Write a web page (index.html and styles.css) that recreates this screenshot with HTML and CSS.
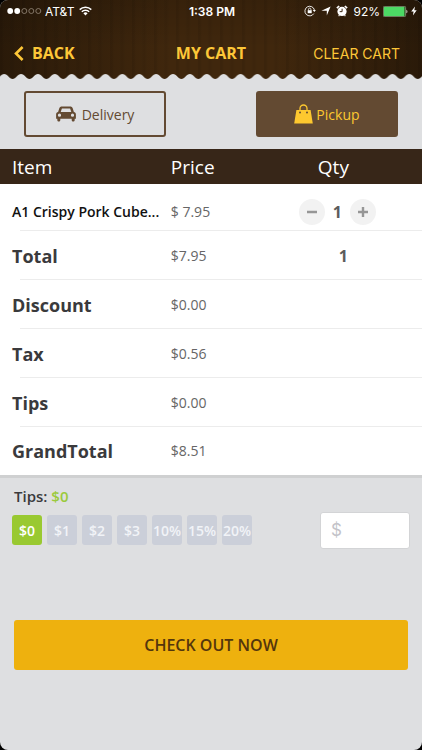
FILE: index.html
```html
<!DOCTYPE html>
<html lang="en">
<head>
  <meta charset="UTF-8">
  <meta name="viewport" content="width=device-width, initial-scale=1">
  <title>My Cart</title>
  <link rel="stylesheet" href="styles.css">
</head>
<body>
  <div class="screen">

    <header class="header">
      <div class="status-bar">
        <div class="status-left">
          <svg width="35" height="8" viewBox="0 0 35 8">
            <g fill="#fff"><circle cx="3.2" cy="4" r="2.9"/><circle cx="10.2" cy="4" r="2.9"/></g>
            <g fill="none" stroke="#a89b8c" stroke-width=".7"><circle cx="17.3" cy="4" r="2.5"/><circle cx="24.3" cy="4" r="2.5"/><circle cx="31.3" cy="4" r="2.5"/></g>
          </svg>
          <span>AT&amp;T</span>
          <svg class="wifi" width="13" height="10" viewBox="0 0 13 10" fill="none" stroke="#fff" stroke-width="1.5">
            <path d="M.7 3.6a8.3 8.3 0 0 1 11.6 0M2.8 5.8a5.3 5.3 0 0 1 7.4 0"/>
            <path d="M4.4 7.2a3 3 0 0 1 4.2 0L6.5 9.6z" fill="#fff" stroke="none"/>
          </svg>
        </div>
        <span class="clock">1:38 PM</span>
        <div class="status-right">
          <svg width="12" height="12" viewBox="0 0 12 12" fill="none" stroke="#fff">
            <path d="M9.8 8.6A4.8 4.8 0 1 1 10.4 5" stroke-width=".9"/>
            <path d="M8.7 5h3.2l-1.6 2.1z" fill="#fff" stroke="none"/>
            <path d="M4.5 5.4V4.3a1.2 1.2 0 0 1 2.4 0v1.1" stroke-width=".8"/>
            <rect x="3.7" y="5.2" width="4" height="3" fill="#fff" stroke="none"/>
          </svg>
          <svg width="10" height="10" viewBox="0 0 10 10" fill="#fff"><path d="M9.6.4L5.8 9.6V4.8H.4z"/></svg>
          <svg width="12" height="12" viewBox="0 0 11 11">
            <circle cx="5.5" cy="5.9" r="4.2" fill="#fff"/>
            <path d="M.8 2.9L2.9.9M10.2 2.9L8.1.9" stroke="#fff" stroke-width="1.5"/>
            <path d="M2.4 10.2l.8-.9M8.6 10.2l-.8-.9" stroke="#fff"/>
            <path d="M5.6 3.4v2.7H3.4" fill="none" stroke="#38230d" stroke-width=".9"/>
          </svg>
          <span>92%</span>
          <svg width="25" height="11" viewBox="0 0 25 11">
            <rect x=".4" y=".4" width="22.2" height="10.2" rx="1" fill="none" stroke="#87a680" stroke-width=".8"/>
            <rect x="1" y="1" width="20.5" height="9" fill="#4cd964"/>
            <path d="M23.4 3.7c1.4.5 1.4 3.1 0 3.6z" fill="#d8d3cc"/>
          </svg>
          <svg width="6" height="10" viewBox="0 0 6 10" fill="#fff"><path d="M4 .5L.2 5.6h2.4L1.9 9.5l3.8-5.3H3.3z"/></svg>
        </div>
      </div>

      <nav class="nav">
        <a class="back" href="#">
          <svg width="10" height="15" viewBox="0 0 10 15" fill="none" stroke="currentColor" stroke-width="2.6"><path d="M8.6 1L2 7.5 8.6 14"/></svg>
          BACK
        </a>
        <h1>MY CART</h1>
        <a class="clear" href="#">CLEAR CART</a>
      </nav>

      <!-- scalloped bottom edge -->
      <svg class="scallop" viewBox="0 0 422 6" preserveAspectRatio="none">
        <defs>
          <pattern id="wave" x="4.2" width="16.88" height="6" patternUnits="userSpaceOnUse">
            <path d="M0 0C3.4 0 5.3 5 8.44 5S13.5 0 16.88 0V6H0z" fill="#dedfe1"/>
          </pattern>
        </defs>
        <rect width="422" height="6" fill="url(#wave)"/>
      </svg>
    </header>

    <main>
      <div class="order-type">
        <button class="type-btn" type="button">
          <svg width="20" height="16" viewBox="0 0 20 16">
            <path fill="currentColor" fill-rule="evenodd" d="M6 .5h8c1.4 0 2.3.6 2.7 1.8l1.2 3.8c1.2.3 2 1.2 2 2.4v4.3h-1.2v1.3c0 2-3 2-3 0v-1.3H4.3v1.3c0 2-3 2-3 0v-1.3H.1V8.5c0-1.2.8-2.1 2-2.4l1.2-3.8C3.7 1.1 4.6.5 6 .5zM5.9 2.4L4.7 6h10.6l-1.2-3.6zM3.5 7.6a1.6 1.6 0 1 0 0 3.2 1.6 1.6 0 0 0 0-3.2zm13 0a1.6 1.6 0 1 0 0 3.2 1.6 1.6 0 0 0 0-3.2z"/>
          </svg>
          Delivery
        </button>
        <button class="type-btn active" type="button">
          <svg width="19" height="20" viewBox="0 0 19 20">
            <path d="M6 8V4.5a3.5 3.5 0 0 1 7 0V8" fill="none" stroke="#fdc82f" stroke-width="1.3"/>
            <path d="M2.4 6h14.2L18.8 19.5H.2z" fill="#fdc82f"/>
            <circle cx="6" cy="8.4" r="1" fill="#634a32"/><circle cx="13" cy="8.4" r="1" fill="#634a32"/>
          </svg>
          Pickup
        </button>
      </div>

      <table class="cart">
        <thead>
          <tr><th>Item</th><th>Price</th><th>Qty</th></tr>
        </thead>
        <tbody>
          <tr class="product">
            <th scope="row">A1 Crispy Pork Cube...</th>
            <td>$ 7.95</td>
            <td>
              <div class="stepper">
                <button type="button" aria-label="Remove one"><svg width="12" height="12" viewBox="0 0 12 12"><path d="M1 6h10"/></svg></button>
                <span>1</span>
                <button type="button" aria-label="Add one"><svg width="12" height="12" viewBox="0 0 12 12"><path d="M1 6h10M6 1v10"/></svg></button>
              </div>
            </td>
          </tr>
          <tr><th scope="row">Total</th><td>$7.95</td><td class="count">1</td></tr>
          <tr><th scope="row">Discount</th><td>$0.00</td><td></td></tr>
          <tr><th scope="row">Tax</th><td>$0.56</td><td></td></tr>
          <tr><th scope="row">Tips</th><td>$0.00</td><td></td></tr>
          <tr><th scope="row">GrandTotal</th><td>$8.51</td><td></td></tr>
        </tbody>
      </table>

      <section class="tips">
        <label class="tips-label" for="tip">Tips: <span>$0</span></label>
        <div class="tips-row">
          <div class="tip-options">
            <button class="selected" type="button">$0</button>
            <button type="button">$1</button>
            <button type="button">$2</button>
            <button type="button">$3</button>
            <button type="button">10%</button>
            <button type="button">15%</button>
            <button type="button">20%</button>
          </div>
          <input id="tip" type="text" placeholder="$">
        </div>
      </section>

      <button class="checkout" type="button">CHECK OUT NOW</button>
    </main>

  </div>
</body>
</html>
```
FILE: styles.css
```css
* {
  box-sizing: border-box;
}

html {
  background: #000;
}

body {
  margin: 0;
  font-family: "Open Sans", "Noto Sans", sans-serif;
  color: #3a3a3c;
}

button,
input {
  font-family: inherit;
  margin: 0;
  padding: 0;
}

button {
  border: none;
  cursor: pointer;
}

svg {
  display: block;
  flex: none;
}

.screen {
  min-height: 100vh;
  background: #dedfe1;
  border-radius: 8px;
  overflow: hidden;
}

/* Header */
.header {
  background:
    repeating-linear-gradient(90deg, rgba(0,0,0,0.08) 0 2px, transparent 4px 9px, rgba(0,0,0,0.05) 11px 13px, transparent 15px 22px),
    linear-gradient(rgba(0,0,0,0.15), transparent 60%),
    linear-gradient(90deg, #2a1a09, #40270d 40%, #40270d 65%, #2a1a09);
}

.status-bar,
.nav {
  display: grid;
  grid-template-columns: 1fr auto 1fr;
  align-items: center;
}

.status-bar {
  height: 22px;
  padding: 0 5px 0 7px;
  font-family: Inter, "Liberation Sans", sans-serif;
  font-size: 12px;
  color: #fff;
}

.status-left,
.status-right {
  display: flex;
  align-items: center;
  gap: 3px;
}

.status-right {
  justify-content: flex-end;
}

.status-right svg:nth-of-type(-n+3) {
  margin-right: 2px;
}

.wifi {
  margin-left: 2px;
}

.clock {
  font-weight: 600;
}

.nav {
  height: 52px;
  padding: 10px 14px 0;
}

.nav a {
  color: #fdc738;
  text-decoration: none;
}

.nav h1 {
  margin: 0;
  font-size: 16px;
  font-weight: 700;
  color: #fdc738;
}

.back {
  display: flex;
  align-items: center;
  gap: 8px;
  font-size: 16px;
  font-weight: 700;
}

.nav .clear {
  justify-self: end;
  margin-right: 8px;
  font-family: Inter, "Liberation Sans", sans-serif;
  font-size: 14px;
}

.scallop {
  width: 100%;
  height: 6px;
}

/* Delivery / pickup */
.order-type {
  display: flex;
  justify-content: space-between;
  padding: 11px 24px 12px;
}

.type-btn {
  display: flex;
  align-items: center;
  justify-content: center;
  gap: 6px;
  width: 38%;
  height: 46px;
  border: 2px solid #634a32;
  border-radius: 3px;
  background: transparent;
  color: #634a32;
  font-size: 14px;
}

.type-btn.active {
  gap: 3px;
  background: #634a32;
  color: #fdc82f;
}

/* Cart table */
.cart {
  width: 100%;
  table-layout: fixed;
  border-collapse: collapse;
  background: #fff;
  border-bottom: 3px solid #cfd0d1;
}

.cart th,
.cart td {
  height: 49px;
  padding: 0;
  text-align: left;
}

.cart thead th {
  height: 35px;
  background: #372618;
  color: #fff;
  font-size: 19px;
  font-weight: 400;
}

.cart th:first-child {
  width: 40%;
  padding-left: 12px;
}

.cart th:nth-child(2),
.cart td:nth-child(2) {
  width: 18%;
  padding-left: 2px;
}

.cart th:last-child,
.cart td:last-child {
  text-align: center;
}

.cart tbody th {
  font-size: 18px;
  font-weight: 700;
}

.cart tbody td {
  color: #666;
  font-size: 14px;
}

/* row rule, inset on the left */
.cart tbody tr:not(:last-child) > * {
  background: linear-gradient(#ececec, #ececec) 0 100% / 100% 1px no-repeat;
}

.cart tbody tr:not(:last-child) > th {
  background-position: 20px 100%;
}

.cart .product > * {
  height: 47px;
  padding-top: 8px;
}

.cart .product th {
  color: #111;
  font-size: 14px;
  font-weight: 600;
  white-space: nowrap;
}

.stepper {
  display: flex;
  align-items: center;
  justify-content: center;
  gap: 8px;
  padding-left: 8px;
}

.stepper button {
  display: flex;
  align-items: center;
  justify-content: center;
  width: 26px;
  height: 26px;
  border-radius: 50%;
  background: #f2f2f2;
}

.stepper path {
  stroke: #969696;
  stroke-width: 2.4;
}

.stepper span,
.cart .count {
  color: #5c5c5c;
  font-size: 16px;
  font-weight: 700;
}

.cart .count {
  padding-left: 20px;
}

/* Tips */
.tips {
  padding: 7px 12px 0;
}

.tips-label {
  display: block;
  padding-left: 2px;
  font-size: 15px;
  line-height: 22px;
  font-weight: 600;
}

.tips-label span {
  color: #9aca3c;
}

.tips-row {
  display: flex;
  align-items: center;
  justify-content: space-between;
  margin-top: 5px;
}

.tip-options {
  display: flex;
  gap: 5px;
}

.tip-options button {
  display: flex;
  align-items: center;
  justify-content: center;
  width: 30px;
  height: 30px;
  border-radius: 3px;
  background: #cbcfd9;
  color: #f1f3f7;
  font-size: 14px;
  font-weight: 600;
}

.tip-options .selected {
  background: #99c931;
  color: #fff;
}

.tips-row input {
  width: 90px;
  height: 37px;
  padding-left: 10px;
  border: 1px solid #d3d4d6;
  border-radius: 3px;
  background: #fff;
  font-family: Inter, "Liberation Sans", sans-serif;
  font-size: 17px;
}

.tips-row input::placeholder {
  color: #c3c3c9;
}

.checkout {
  display: block;
  width: calc(100% - 28px);
  height: 50px;
  margin: 71px 14px 0;
  border-radius: 3px;
  background: #eeb10e;
  color: #54360c;
  font-size: 16px;
  font-weight: 600;
}
```
